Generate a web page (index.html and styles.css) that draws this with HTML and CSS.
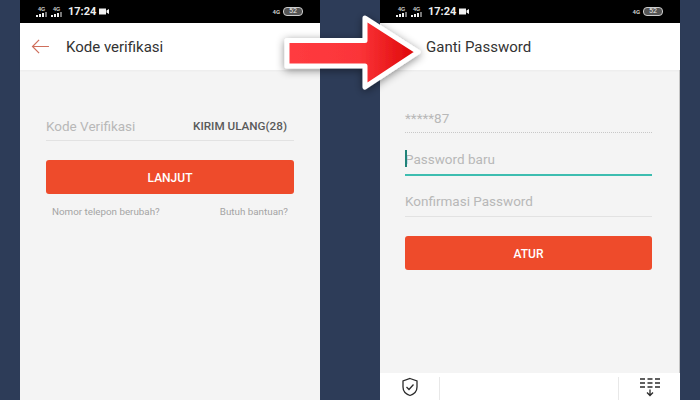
FILE: index.html
```html
<!DOCTYPE html>
<html lang="en">

<head>
  <meta charset="UTF-8">
  <meta name="viewport" content="width=device-width, initial-scale=1.0">
  <title>Ganti Password</title>
  <link rel="stylesheet" href="styles.css">
</head>

<body>
  <div class="stage">

    <!-- left phone -->
    <div class="phone">
      <div class="status">
        <div class="status-left">
          <svg class="signal" viewBox="0 0 12 11"><use href="#sig"></use></svg>
          <svg class="signal" viewBox="0 0 12 11"><use href="#sig"></use></svg>
          <span class="time">17:24</span>
          <svg class="cam" viewBox="0 0 10 7"><use href="#cam"></use></svg>
        </div>
        <div class="status-right">
          <span class="net">4G</span>
          <span class="battery">52</span>
        </div>
      </div>
      <div class="header">
        <svg class="back" viewBox="0 0 20 16">
          <path d="M19 8H1.500M8.500 1L1.500 8L8.500 15" />
        </svg>
        <span class="title">Kode verifikasi</span>
      </div>
      <div class="body body-left">
        <div class="field field-code">
          <span class="hint">Kode Verifikasi</span>
          <span class="resend">KIRIM ULANG(28)</span>
        </div>
        <div class="btn">LANJUT</div>
        <div class="links">
          <span>Nomor telepon berubah?</span>
          <span>Butuh bantuan?</span>
        </div>
      </div>
    </div>

    <!-- right phone -->
    <div class="phone">
      <div class="status">
        <div class="status-left">
          <svg class="signal" viewBox="0 0 12 11"><use href="#sig"></use></svg>
          <svg class="signal" viewBox="0 0 12 11"><use href="#sig"></use></svg>
          <span class="time">17:24</span>
          <svg class="cam" viewBox="0 0 10 7"><use href="#cam"></use></svg>
        </div>
        <div class="status-right">
          <span class="net">4G</span>
          <span class="battery">52</span>
        </div>
      </div>
      <div class="header header-right">
        <span class="title title-right">Ganti Password</span>
      </div>
      <div class="body body-right">
        <div class="field field-dotted"><span class="hint">*****87</span></div>
        <div class="field field-active"><span class="caret"></span><span class="hint">Password baru</span></div>
        <div class="field field-last"><span class="hint">Konfirmasi Password</span></div>
        <div class="btn">ATUR</div>
      </div>
      <div class="keybar">
        <div class="key-cell">
          <svg class="shield" viewBox="0 0 18 20">
            <path d="M9 1.500L16 4V10C16 14.500 12.500 17.300 9 18.500C5.500 17.300 2 14.500 2 10V4Z" />
            <path d="M5.500 10L8 12.500L12.500 7.500" />
          </svg>
        </div>
        <div class="key-mid"></div>
        <div class="key-cell key-cell-right">
          <svg class="kbd" viewBox="0 0 22 20">
            <path d="M1 2H6M8.500 2H13.500M16 2H21M1 6H6M8.500 6H13.500M16 6H21M1 10H6M8.500 10H13.500M16 10H21" />
            <path d="M11 12.500V18M8 15.500L11 18.500L14 15.500" />
          </svg>
        </div>
      </div>
    </div>

    <!-- arrow over both phones -->
    <svg class="arrow" viewBox="0 0 150 84">
      <defs>
        <linearGradient id="arrowFill" x1="0" y1="0" x2="1" y2="0">
          <stop offset="0" stop-color="#ff3b40" />
          <stop offset="0.55" stop-color="#fb3539" />
          <stop offset="1" stop-color="#dc0506" />
        </linearGradient>
        <filter id="arrowShadow" x="-10%" y="-20%" width="125%" height="150%">
          <feDropShadow dx="0" dy="2" stdDeviation="4" flood-color="#000" flood-opacity="0.45" />
        </filter>
      </defs>
      <polygon class="arrow-shape" points="9,30.500 87,30.500 87,8 140,42 87,77 87,56 9,56" />
    </svg>
  </div>

  <svg class="sprites">
    <symbol id="sig" viewBox="0 0 12 11">
      <text x="2" y="5" font-size="5.500" font-weight="700" font-family="Liberation Sans, sans-serif" fill="#ccc">4G</text>
      <path d="M0 9h2v2H0zM3 8h2v3H3zM6 7h2v4H6zM9.500 6h1v5h-1z" fill="#eee" />
    </symbol>
    <symbol id="cam" viewBox="0 0 10 7">
      <path d="M0 .5h7v6H0zM7.500 2.500L10 1v5L7.500 4.500z" fill="#f2f2f2" />
    </symbol>
  </svg>
</body>

</html>
```

FILE: styles.css
```css
* {
  margin: 0;
  padding: 0;
  box-sizing: border-box;
}

body {
  width: 700px;
  height: 400px;
  overflow: hidden;
  background-color: #2d3c58;
  font-family: Roboto, "Liberation Sans", sans-serif;
}

.stage {
  position: relative;
  display: flex;
  gap: 60px;
  height: 400px;
  padding: 0 20px;
}

.sprites {
  display: none;
}

.phone {
  display: flex;
  flex-direction: column;
  width: 300px;
  height: 400px;
  background-color: #f4f4f4;
}

/* status bar */
.status {
  display: flex;
  justify-content: space-between;
  align-items: center;
  height: 23px;
  padding: 0 17px 0 16px;
  background-color: #000;
}

.status-left,
.status-right {
  display: flex;
  align-items: center;
}

.signal {
  width: 12px;
  height: 11px;
  margin-right: 3px;
}

.time {
  margin: 0 3px 0 2px;
  color: #eee;
  font-size: 11px;
  font-weight: 700;
}

.cam {
  width: 10px;
  height: 7px;
}

.net {
  margin-right: 3px;
  color: #ccc;
  font-size: 6px;
  font-weight: 700;
}

.battery {
  width: 20px;
  height: 9px;
  border: 1px solid #ccc;
  border-radius: 4px;
  background-color: #555;
  color: #eee;
  font-size: 7px;
  line-height: 7px;
  text-align: center;
}

/* header */
.header {
  display: flex;
  align-items: center;
  height: 47px;
  padding-left: 11px;
  background-color: #fff;
  box-shadow: 0 1px 2px rgba(0, 0, 0, 0.04);
}

.back {
  width: 19px;
  height: 15px;
  margin-right: 16px;
  fill: none;
  stroke: #cf6f5c;
  stroke-width: 1.300;
}

.title {
  color: #333;
  font-size: 15px;
}

.title-right {
  padding-left: 35px;
}

/* forms */
.body {
  display: flex;
  flex-direction: column;
  flex: 1;
}

.body-left {
  padding: 43px 26px 0;
}

.body-right {
  padding: 26px 27px 0 25px;
  border-right: 1px solid #c4c4c4;
}

.field {
  display: flex;
  align-items: center;
  height: 42px;
  border-bottom: 1px solid #e2e2e2;
  padding-top: 5px;
}

.field-code {
  justify-content: space-between;
  height: 28px;
  padding: 0 7px 2px 0;
}

.field-dotted {
  height: 37px;
  padding-top: 8px;
  border-bottom: 1px dotted #c8c8c8;
}

.field-active {
  position: relative;
  height: 43px;
  padding-top: 11px;
  border-bottom: 2px solid #3dbdb0;
}

.field-last {
  height: 41px;
  padding-top: 10px;
}

.caret {
  position: absolute;
  left: 0;
  top: 17px;
  width: 2px;
  height: 17px;
  background-color: #1f8278;
}

.hint {
  color: #b8b8b8;
  font-size: 13.500px;
}

.resend {
  color: #5a5a5a;
  font-size: 11.700px;
  font-weight: 500;
}

.btn {
  display: flex;
  justify-content: center;
  align-items: center;
  height: 34px;
  margin-top: 19px;
  padding-top: 1px;
  border-radius: 3px;
  background-color: #ee4b2b;
  color: #fff;
  font-size: 12px;
  font-weight: 500;
}

.links {
  display: flex;
  justify-content: space-between;
  margin-top: 12px;
  padding: 0 6px;
  color: #a4a4a4;
  font-size: 9.800px;
}

/* keyboard strip */
.keybar {
  display: flex;
  align-items: center;
  height: 27px;
  background-color: #fff;
}

.key-cell {
  display: flex;
  justify-content: center;
  width: 59px;
}

.key-cell-right {
  width: 61px;
}

.key-mid {
  flex: 1;
  height: 23px;
  margin-top: 4px;
  border-left: 1px solid #e8e8e8;
  border-right: 1px solid #e8e8e8;
}

.shield {
  width: 18px;
  height: 20px;
  fill: none;
  stroke: #2b2b2b;
  stroke-width: 1.300;
}

.kbd {
  width: 22px;
  height: 20px;
  fill: none;
  stroke: #2b2b2b;
  stroke-width: 1.300;
}

/* arrow on top of everything */
.arrow {
  position: absolute;
  left: 278px;
  top: 10px;
  width: 150px;
  height: 84px;
  overflow: visible;
}

.arrow-shape {
  fill: url(#arrowFill);
  stroke: #fff;
  stroke-width: 5;
  stroke-linejoin: round;
  filter: url(#arrowShadow);
}
```
